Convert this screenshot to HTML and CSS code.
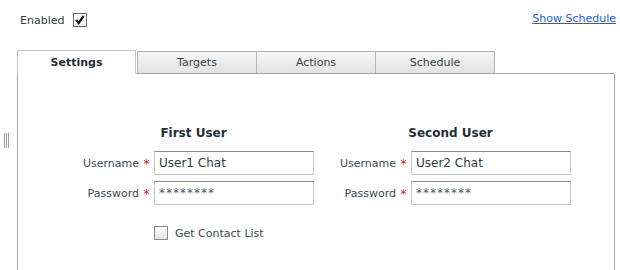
FILE: index.html
```html
<!DOCTYPE html>
<html lang="en">
<head>
    <meta charset="UTF-8">
    <title>Chat Settings</title>
    <link rel="stylesheet" href="styles.css">
</head>
<body>
    <div class="top-bar">
        <label class="enabled">
            Enabled
            <span class="check checked">
                <svg viewBox="0 0 12 12" width="12" height="12"><path d="M2.2 6 L4.6 9.2 L9.6 2" fill="none" stroke="#111" stroke-width="2.2"/></svg>
            </span>
        </label>
        <a class="show-link" href="#">Show Schedule</a>
    </div>

    <div class="splitter"><span></span><span></span><span></span></div>

    <div class="tabs-wrap">
        <ul class="tabs">
            <li class="tab active">Settings</li>
            <li class="tab">Targets</li>
            <li class="tab">Actions</li>
            <li class="tab">Schedule</li>
        </ul>
        <div class="panel">
            <div class="users">
                <div class="user-group">
                    <div class="group-title">First User</div>
                    <label class="field-label">Username</label><span class="req">*</span>
                    <input class="field" type="text" value="User1 Chat">
                    <label class="field-label">Password</label><span class="req">*</span>
                    <input class="field secret" type="text" value="********">
                </div>
                <div class="user-group">
                    <div class="group-title">Second User</div>
                    <label class="field-label">Username</label><span class="req">*</span>
                    <input class="field" type="text" value="User2 Chat">
                    <label class="field-label">Password</label><span class="req">*</span>
                    <input class="field secret" type="text" value="********">
                </div>
            </div>
            <label class="contact-row">
                <span class="check"></span>
                Get Contact List
            </label>
        </div>
    </div>
</body>
</html>
```

FILE: styles.css
```css
body {
    margin: 0;
    width: 620px;
    height: 270px;
    overflow: hidden;
    position: relative;
    background: #fff;
    font-family: "DejaVu Sans", Verdana, sans-serif;
    font-size: 11px;
    color: #2f3c44;
}

.top-bar {
    display: flex;
    justify-content: space-between;
    align-items: flex-start;
    padding: 12px 4px 0 20px;
    height: 38px;
    box-sizing: border-box;
}

.enabled {
    display: flex;
    align-items: center;
    gap: 9px;
    margin-top: 1px;
}

.show-link {
    color: #2a5bd7;
    text-decoration: underline;
}

.check {
    display: inline-block;
    width: 12px;
    height: 12px;
    border: 1px solid #8a8a8a;
    background: linear-gradient(#fdfdfd, #e4e4e4);
    position: relative;
}

.check.checked {
    border-color: #6a6a6a;
    background: linear-gradient(#ffffff, #ededed);
}

.check svg {
    position: absolute;
    left: 0;
    top: 0;
}

.splitter {
    position: absolute;
    left: 4px;
    top: 133px;
    display: flex;
    gap: 1px;
}

.splitter span {
    width: 1px;
    height: 15px;
    background: #9a9a9a;
}

.tabs-wrap {
    margin: 12px 5px 0 17px;
}

.tabs {
    list-style: none;
    margin: 0;
    padding: 0;
    display: flex;
    align-items: flex-end;
    height: 23px;
}

.tab {
    width: 118px;
    height: 21px;
    line-height: 21px;
    text-align: center;
    border: 1px solid #b4b4b4;
    border-bottom: none;
    margin-left: -1px;
    background: linear-gradient(#f7f7f7, #e2e2e2);
    color: #33424a;
}

.tab.active {
    width: 117px;
    height: 23px;
    line-height: 24px;
    margin-left: 0;
    margin-right: 2px;
    margin-bottom: -1px;
    background: #fff;
    font-weight: bold;
    color: #1f2e37;
    border-color: #c4c4c4;
    position: relative;
}

.panel {
    border: 1px solid #a8a8a8;
    height: 260px;
    box-sizing: border-box;
    padding: 50px 0 0 51px;
}

.users {
    display: flex;
    gap: 12px;
}

.user-group {
    display: grid;
    grid-template-columns: 70px 15px 160px;
    grid-template-rows: 21px 24px 24px;
    row-gap: 6px;
    align-items: center;
}

.group-title {
    grid-column: 1 / -1;
    align-self: start;
    text-align: center;
    font-weight: bold;
    font-size: 12px;
    color: #1f2e37;
    padding-left: 4px;
    line-height: 18px;
}

.field-label {
    text-align: right;
    color: #3a4850;
}

.req {
    color: #d02020;
    text-align: center;
    font-size: 12px;
    padding-top: 2px;
}

.field {
    box-sizing: border-box;
    width: 160px;
    height: 24px;
    margin: 0;
    padding: 0 4px;
    border: 1px solid #c6c6c6;
    border-top-color: #8c8c8c;
    font-family: inherit;
    font-size: 12px;
    color: #2f3c44;
    outline: none;
}

.field.secret {
    color: #4d5d6b;
    letter-spacing: 1px;
}

.contact-row {
    display: flex;
    align-items: center;
    gap: 7px;
    margin: 21px 0 0 85px;
    color: #3a4850;
}
```
